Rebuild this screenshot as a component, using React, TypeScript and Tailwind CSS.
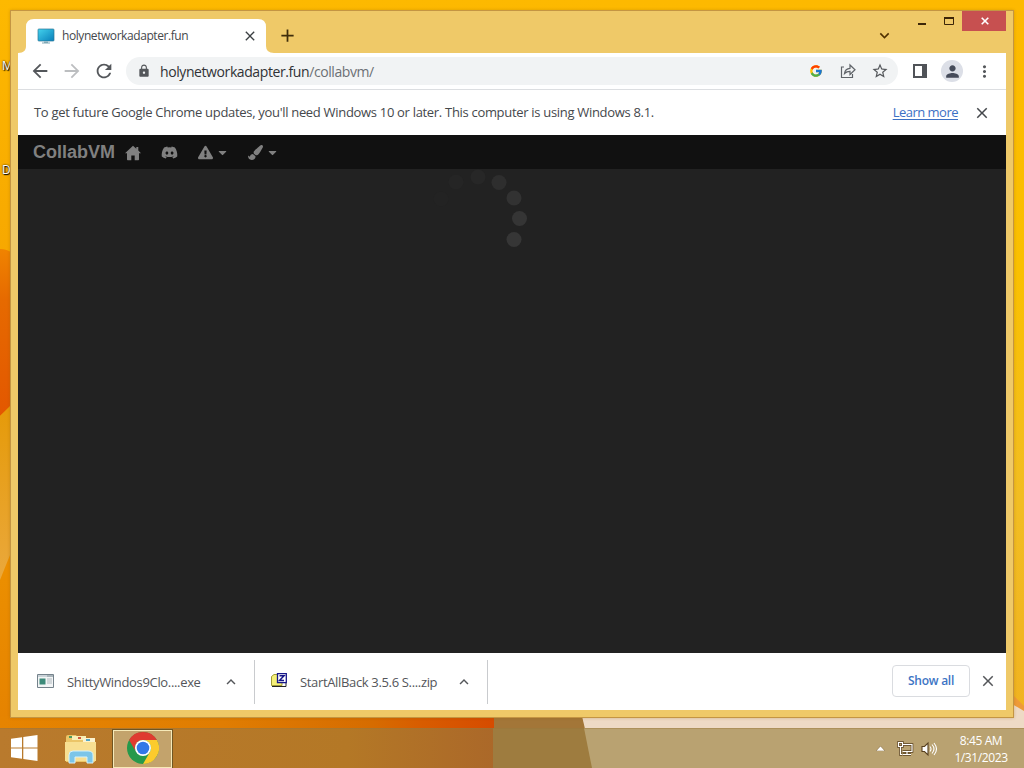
import React from 'react';
import { FaDiscord, FaExclamationTriangle, FaPaintBrush, FaCaretDown } from 'react-icons/fa';
import { MdArrowBack, MdArrowForward, MdRefresh, MdLock, MdStarBorder, MdPerson, MdMoreVert, MdClose, MdAdd, MdKeyboardArrowDown, MdKeyboardArrowUp } from 'react-icons/md';
import { FcGoogle } from 'react-icons/fc';

function Wallpaper() {
  return (
    <svg className="absolute inset-0" width="1024" height="768" viewBox="0 0 1024 768">
      <defs>
        <linearGradient id="base" x1="0" y1="0" x2="0" y2="1">
          <stop offset="0" stopColor="#fdb900" />
          <stop offset="0.33" stopColor="#f7a800" />
          <stop offset="1" stopColor="#e47f00" />
        </linearGradient>
        <linearGradient id="right" x1="0" y1="0" x2="0" y2="1">
          <stop offset="0" stopColor="#fdb900" />
          <stop offset="0.35" stopColor="#fac000" />
          <stop offset="0.65" stopColor="#f2bd22" />
          <stop offset="1" stopColor="#f0b020" />
        </linearGradient>
        <linearGradient id="petal" x1="0" y1="0" x2="0" y2="1">
          <stop offset="0" stopColor="#f08300" />
          <stop offset="0.3" stopColor="#e66a00" />
          <stop offset="1" stopColor="#e35700" />
        </linearGradient>
        <linearGradient id="leaf" x1="0" y1="0" x2="0" y2="1">
          <stop offset="0" stopColor="#e59a08" />
          <stop offset="1" stopColor="#eaa83c" />
        </linearGradient>
        <linearGradient id="bottom" gradientUnits="userSpaceOnUse" x1="0" y1="0" x2="496" y2="0">
          <stop offset="0" stopColor="#e68400" />
          <stop offset="0.45" stopColor="#e07d02" />
          <stop offset="0.75" stopColor="#d66c00" />
          <stop offset="0.85" stopColor="#d85c00" />
          <stop offset="1" stopColor="#d64b00" />
        </linearGradient>
        <linearGradient id="glass" gradientUnits="userSpaceOnUse" x1="0" y1="0" x2="496" y2="0">
          <stop offset="0" stopColor="#b97a2d" />
          <stop offset="0.7" stopColor="#b47826" />
          <stop offset="1" stopColor="#ab6829" />
        </linearGradient>
      </defs>
      <rect width="1024" height="768" fill="url(#base)" />
      <rect x="600" width="424" height="768" fill="url(#right)" />
      <path d="M0 249Q7 249 12 253V405L0 416Z" fill="url(#petal)" />
      <path d="M0 416L12 404V550L0 580Z" fill="url(#leaf)" />
      <rect y="716" width="496" height="52" fill="url(#bottom)" />
      <rect x="494" y="716" width="100" height="52" fill="#a37638" />
      <path d="M582 716H1024V768H594Z" fill="#eedac5" />
      <path d="M1012 694L1024 706V714L1012 708Z" fill="#ee9a38" />
      <path d="M1012 704L1024 711V718H1012Z" fill="#eedac5" />
      <rect y="728" width="494" height="40" fill="url(#glass)" />
      <rect x="493" y="728" width="110" height="40" fill="#9e7c3f" />
      <path d="M584 728H1024V768H592Z" fill="#b9a271" />
    </svg>
  );
}

function TitleBar() {
  return (
    <div className="relative flex h-[42px] shrink-0 items-end">
      <svg className="absolute left-0 top-[8px]" width="262" height="34" viewBox="0 0 262 34">
        <path d="M0 34C6 34 8 31 8 27V8Q8 0 16 0H240Q248 0 248 8V27Q248 34 256 34Z" fill="#fff" />
      </svg>
      <div className="relative flex h-[34px] w-[248px] items-center pl-[19px]">
        <svg width="18" height="16" viewBox="0 0 18 16">
          <defs>
            <linearGradient id="screen" x1="0" y1="0" x2="1" y2="1">
              <stop stopColor="#44d2ed" />
              <stop offset="1" stopColor="#087fba" />
            </linearGradient>
          </defs>
          <rect x="1" y="1" width="16" height="12" rx="0.8" fill="url(#screen)" stroke="#2b7795" strokeWidth="0.7" />
          <path d="M7 13.5h4v1H7zM5 14.5h8v1H5z" fill="#80a8b5" />
        </svg>
        <span className="ml-[7px] w-[180px] whitespace-nowrap text-[12px] tracking-[-0.43px] text-[#45484c]">holynetworkadapter.fun</span>
        <MdClose className="shrink-0 text-[#3c4043]" size={16} />
      </div>
      <MdAdd className="mb-[7px] ml-[11px] text-[#3f2d0b]" size={21} />
      <MdKeyboardArrowDown className="mb-[8px] ml-auto mr-[112px] text-[#503000]" size={19} />
      <div className="absolute right-0 top-0 flex h-[20px] items-center">
        <svg className="mr-[4px]" width="42" height="20" viewBox="0 0 42 20">
          <path d="M2 12h8v2H2z" fill="#3d2608" />
          <path d="M28.500 7h9v6.500h-9z" fill="none" stroke="#3d2608" />
          <path d="M28 6h10v2h-10z" fill="#3d2608" />
        </svg>
        <div className="flex h-[20px] w-[44px] items-center justify-center bg-[#c75050] pl-[2px]">
          <svg width="8" height="8" viewBox="0 0 8 8"><path d="M.7.7l6.600 6.600M7.300.7L.7 7.300" stroke="#fff" strokeWidth="1.600" /></svg>
        </div>
      </div>
    </div>
  );
}

function Toolbar() {
  return (
    <div className="flex h-[37px] shrink-0 items-center border-b border-[#dcdee1] bg-white text-[#54575b]">
      <MdArrowBack className="ml-[11px]" size={22} />
      <MdArrowForward className="ml-[10px] text-[#bcbec0]" size={22} />
      <MdRefresh className="ml-[10px]" size={22} />
      <div className="ml-[11px] flex h-[28px] w-[772px] items-center rounded-full bg-[#f1f3f4] pl-[11px] pr-[9px]">
        <MdLock size={14} />
        <span className="ml-[9px] whitespace-nowrap text-[14px] tracking-[-0.41px] text-[#303236]">
          holynetworkadapter.fun<span className="text-[#6c7075]">/collabvm/</span>
        </span>
        <FcGoogle className="ml-auto mr-[17px]" size={14} />
        <svg className="mr-[15px]" width="16" height="16" viewBox="0 0 16 16" fill="none" stroke="#5f6368" strokeWidth="1.200">
          <path d="M4 4H1.500v10.500h11V11M4.500 10.500C5 7 7 5.500 10 5.300V2l5 4.800-5 4.700V8.300C7.500 8.300 6 9 4.500 10.500Z" />
        </svg>
        <MdStarBorder size={18} />
      </div>
      <svg className="ml-[14px]" width="16" height="16" viewBox="0 0 16 16">
        <path d="M2 2h12v12h-12z" fill="none" stroke="#505358" strokeWidth="2" />
        <path d="M10 1h5v14h-5z" fill="#505358" />
      </svg>
      <div className="ml-[13px] flex size-[22px] items-center justify-center rounded-full bg-[#dcdfe7]">
        <MdPerson className="text-[#454b5a]" size={19} />
      </div>
      <MdMoreVert className="ml-[12px]" size={19} />
    </div>
  );
}

function Notice() {
  return (
    <div className="flex h-[45px] shrink-0 items-center bg-white pl-[16px] pr-[15px] text-[13px] text-[#45484c]">
      <span className="whitespace-nowrap tracking-[-0.31px]">To get future Google Chrome updates, you'll need Windows 10 or later. This computer is using Windows 8.1.</span>
      <span className="ml-auto whitespace-nowrap tracking-[-0.51px] text-[#3c70c4] underline underline-offset-2">Learn more</span>
      <MdClose className="ml-[15px]" size={18} />
    </div>
  );
}

const dots = [
  { x: 441, y: 199, c: '#232323' },
  { x: 456, y: 182, c: '#252525' },
  { x: 478, y: 177, c: '#272727' },
  { x: 499, y: 182.5, c: '#2e2e2e' },
  { x: 514, y: 198, c: '#323232' },
  { x: 519.5, y: 218.5, c: '#353535' },
  { x: 514, y: 239.5, c: '#363636' },
];

function Page() {
  return (
    <div className="flex min-h-0 flex-1 flex-col bg-[#222]">
      <div className="flex h-[34px] shrink-0 items-center bg-[#111] pt-[1px] text-[#808080]">
        <span className="ml-[15px] w-[92px] whitespace-nowrap font-['Liberation_Sans',sans-serif] text-[18px] font-bold">CollabVM</span>
        <svg width="16" height="16" viewBox="0 0 16 16" fill="currentColor">
          <path d="M8 .8L0 8.200h2V14.500q0 .7.7.7H6.300V10.500h3.400v4.700h3.600q.7 0 .7-.7V8.200h2L13.300 5.600V2h-2v1.800Z" />
        </svg>
        <FaDiscord className="ml-[20px]" size={17} />
        <FaExclamationTriangle className="ml-[20px]" size={15} />
        <FaCaretDown className="ml-[3px]" size={13} />
        <FaPaintBrush className="ml-[19px]" size={15} />
        <FaCaretDown className="ml-[3px]" size={13} />
      </div>
      <svg className="block shrink-0" width="988" height="100" viewBox="18 169 988 100">
        {dots.map((d) => <circle key={d.x + '-' + d.y} cx={d.x} cy={d.y} r="7.500" fill={d.c} />)}
      </svg>
    </div>
  );
}

function Downloads() {
  return (
    <div className="flex h-[57px] shrink-0 items-center bg-white text-[13px] text-[#54565a]">
      <div className="flex h-[44px] w-[237px] items-center border-r border-[#c9cbce] pl-[19px]">
        <svg className="mb-[2px]" width="17" height="14" viewBox="0 0 17 14">
          <path d="M.5.5h16v13H.5z" fill="#f3f5f6" stroke="#74828b" />
          <path d="M1 1h15v2H1z" fill="#cbd4d9" />
          <path d="M2.500 4.500h6v6h-6z" fill="#3d8b7a" />
          <path d="M10 5h5M10 7h5M10 9h5" stroke="#b0b9be" />
          <path d="M10.500 2h1M12.500 2h1M14.500 2h1" stroke="#4a5963" />
        </svg>
        <span className="ml-[13px] mt-[2px] w-[155px] whitespace-nowrap tracking-[-0.33px]">ShittyWindos9Clo....exe</span>
        <MdKeyboardArrowUp className="mt-[1px]" size={18} />
      </div>
      <div className="flex h-[44px] w-[233px] items-center border-r border-[#c9cbce] pl-[16px]">
        <svg className="mb-[3px]" width="16" height="15" viewBox="0 0 16 15">
          <path d="M.5 12.500V3.500L3 1.500h8v11z" fill="#f5f078" stroke="#a09c36" />
          <path d="M1 13.500h14V10" fill="none" stroke="#222" />
          <path d="M6.500.7h8.800v9H6.500z" fill="#fff" stroke="#171789" strokeWidth="1.300" />
          <path d="M8.500 2.800h4.500L8.500 7.500h4.500" fill="none" stroke="#171789" strokeWidth="1.500" />
        </svg>
        <span className="ml-[13px] mt-[2px] w-[155px] whitespace-nowrap tracking-[-0.34px]">StartAllBack 3.5.6 S....zip</span>
        <MdKeyboardArrowUp className="mt-[1px]" size={18} />
      </div>
      <div className="mb-[1px] ml-auto flex h-[32px] w-[78px] items-center justify-center rounded-[4px] border border-[#dadce0] text-[12px] font-semibold tracking-[-0.25px] text-[#3d74c4]">Show all</div>
      <MdClose className="mb-[1px] ml-[9px] mr-[9px]" size={18} />
    </div>
  );
}

function Taskbar() {
  return (
    <div className="relative flex h-[40px] shrink-0 items-center border-t border-[#9a753960]">
      <svg className="mb-[2px] ml-[11px]" width="27" height="26" viewBox="0 0 27 26" fill="#fff">
        <path d="M0 3.700L11 2.200V12.400H0zM12.300 2L26.500 0V12.400H12.300zM0 13.600H11V23.800L0 22.300zM12.300 13.600H26.500V26L12.300 24z" />
      </svg>
      <svg className="ml-[27px]" width="32" height="30" viewBox="0 0 32 30">
        <path d="M1 3Q1 1 3 1h8l2 3h17v24H1z" fill="#ebc568" />
        <path d="M7 2h14v4H7z" fill="#f8eeb6" /><path d="M18 4h12v6H18z" fill="#fbf3cf" />
        <path d="M4 2h3v2H4z" fill="#4b9960" /><path d="M13 3h3v2h-3z" fill="#cf5840" /><path d="M21 5h4v2h-4z" fill="#53a7c7" />
        <path d="M0 8h31v19H0z" fill="#f8df91" />
        <path d="M4 29V21Q4 17 8 17h15q5 0 5 4v8h-6v-6H10v6z" fill="#7bc5e8" stroke="#d6f2fa" />
      </svg>
      <div className="ml-[16px] flex h-[38px] w-[59px] items-center justify-center border border-[#f6e9b8] bg-[#c3a36c] outline outline-[#705522]">
        <svg className="mb-[1px]" width="32" height="32" viewBox="0 0 32 32">
          <circle cx="16" cy="16" r="16" fill="#26994b" />
          <path d="M2.140 8A16 16 0 0 1 29.860 8H16A8 8 0 0 0 9.070 20Z" fill="#df3b30" />
          <path d="M29.860 8A16 16 0 0 1 16 32L22.930 20A8 8 0 0 0 16 8Z" fill="#fccb2d" />
          <circle cx="16" cy="16" r="8" fill="#fff" /><circle cx="16" cy="16" r="6.300" fill="#3278e8" />
        </svg>
      </div>
      <svg className="ml-auto" width="9" height="5" viewBox="0 0 9 5"><path d="M0 5L4.500 0L9 5Z" fill="#fff" stroke="#7b6037" strokeWidth="0.5" /></svg>
      <svg className="ml-[12px]" width="17" height="16" viewBox="0 0 17 16" fill="none">
        <path d="M6 3.500h9v7H5.500M10 10.500v3M6 13.500h8M1.500 1.500h4v4h-4zM3.500 5.500v8h2" stroke="#58401f" strokeWidth="2.600" />
        <path d="M6 3.500h9v7H5.500M10 10.500v3M6 13.500h8M1.500 1.500h4v4h-4zM3.500 5.500v8h2" stroke="#fff" strokeWidth="1.200" />
      </svg>
      <svg className="ml-[7px]" width="17" height="16" viewBox="0 0 17 16" fill="none" stroke="#fff" strokeWidth="1.100">
        <path d="M1 5.500h2.500L7 2v12L3.500 10.500H1z" fill="#fff" stroke="#58401f" /><path d="M9 5.500q2 2.500 0 5M11 3.500q4 4.500 0 9M13 2q5 6 0 12" />
      </svg>
      <div className="ml-[10px] mr-[10px] flex w-[66px] flex-col items-center whitespace-nowrap text-[12px] leading-[17px] tracking-[-0.4px] text-white">
        <span>8:45 AM</span><span>1/31/2023</span>
      </div>
    </div>
  );
}

function DesktopLabel({ text }: { text: string }) {
  return <span className="block whitespace-nowrap pl-[2px] text-[12px] leading-[16px] text-white [text-shadow:1px_1px_1px_#000,0_0_2px_#000]">{text}</span>;
}

export default function App() {
  return (
    <div className="relative flex h-[768px] w-[1024px] flex-col overflow-hidden font-['Open_Sans','Noto_Sans',sans-serif]">
      <Wallpaper />
      <div className="relative flex min-h-0 flex-1">
        <div className="flex w-[10px] shrink-0 flex-col gap-[88px] pt-[58px]">
          <DesktopLabel text="M" /><DesktopLabel text="D" />
        </div>
        <div className="relative mt-[10px] flex h-[708px] w-[1004px] shrink-0 flex-col border border-[#c49543] bg-[#efc968] px-[7px] pb-[7px] shadow-[0_0_3px_#8c5b0050]">
          <TitleBar />
          <Toolbar />
          <Notice />
          <Page />
          <Downloads />
        </div>
      </div>
      <Taskbar />
    </div>
  );
}
